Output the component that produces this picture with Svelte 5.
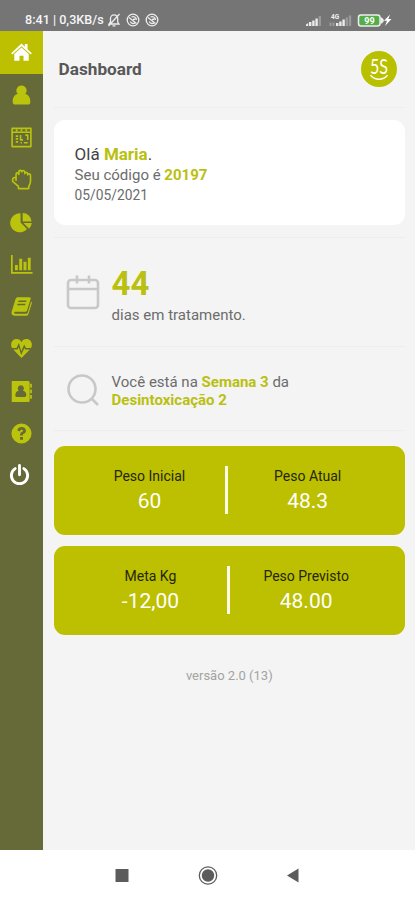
<script lang="ts">
  interface MenuIcon {
    name: string;
    fill?: string;
    stroke?: string;
  }

  const menu: MenuIcon[] = [
    {
      name: "Dashboard",
      fill: "M12 2.700 15.500 6V3.200h2.800v5.400l4.500 4.200-1.200 1.300L12 5.400l-9.600 8.700-1.200-1.300zM12 6.900l7.500 6.700v7.100h-5.400v-5.200H9.900v5.200H4.500v-7.100z",
    },
    {
      name: "Perfil",
      fill: "M12 1.500a5.300 5.300 0 0 1 3.900 8.900c3.300.7 5.300 3.300 5.300 8.300 0 2-1.200 2.800-2.700 2.800h-13c-1.500 0-2.700-.8-2.700-2.800 0-5 2-7.600 5.300-8.300A5.300 5.300 0 0 1 12 1.500z",
    },
    {
      name: "Agenda",
      stroke: "M2.200 2.500h19.600v19H2.200zM2.200 6.500h19.600M6 4.500h2M11 4.500h2M16 4.500h2M6 10.500h2.500M6 13.500h2.500M6 16.500h2.500M11 9.500v5h2.500M16 9.500h2.500v5M14.500 17.500h4M11 17.500h1.500",
    },
    {
      name: "Cuidados",
      stroke: "M6.300 13.500V6.800c0-2.200 2.900-2.200 2.900 0V4.200c0-2.300 3.100-2.300 3.100 0 0-2.200 3.100-2.200 3.100.2v1.500c0-1.900 3-1.900 3 .3v1c0-1.600 3-1.500 3 .4v6.400c0 2-1.100 3.500-1.800 5.200v2.300H8.800v-2.300l-6-5.200V11.500c.6-1.700 2.300-1.900 3.500-1",
    },
    {
      name: "Porções",
      fill: "M11 2.500V12l6.700 6.700A9.900 9.900 0 1 1 11 2.500zM13.200 2a9.300 9.300 0 0 1 9.300 8.900h-9.300zM14 12.500h8.700a9 9 0 0 1-2.800 5.900z",
    },
    {
      name: "Evolução",
      fill: "M1 2h1.800v17.800h20.700v1.800H1zM5.200 12.500h3v5.500h-3zM9.600 6h3.100v12H9.600zM14.100 9h3.100v9h-3.100zM18.600 5h3v13h-3z",
    },
    {
      name: "Receitas",
      fill: "M8.500 2.300h11.800c1 0 1.600.8 1.200 1.800l-3.700 12c-.3.900-1 1.500-2 1.500H5.300c-1.500 0-1.300 2 .1 2h11.500c.8 0 1.300-.3 1.500-1l3.600-11.800c.8.500 1 1.100.7 2L19.300 19.500c-.4 1.400-1.200 2.100-2.500 2.100H4.700C2.300 21.600 1 19.600 1.700 17.500L5.800 4.300c.4-1.300 1.400-2 2.700-2zM9 5.700l-.5 1.600h8.300l.5-1.600zM7.900 9.200l-.5 1.600h8.300l.5-1.600z",
    },
    {
      name: "Saúde",
      fill: "M12 5.500C14-.1 22.800 1.300 22.800 8c0 1.300-.3 2.400-.9 3.500h-5.200l-1.900-3.700-3 7-2.500-8.500-2.500 5.200H2.100C1.500 10.500 1.200 9.400 1.200 8 1.200 1.300 10 .1 12 5.500zM3.300 13h4.600l1.200-2.400 2.600 8.200 3.300-7.200.8 1.400h4.900L12 21.800z",
    },
    {
      name: "Contatos",
      fill: "M1.800 1h17c1 0 1.700.7 1.700 1.700v18.600c0 1-.7 1.700-1.700 1.700h-17zM21 4h1.800v4H21zM21 9.800h1.800v4H21zM21 15.600h1.800v4H21zM11.300 5.400a3.300 3.300 0 0 0-2.200 5.700c-2.300.4-3.500 2-3.500 4.900 0 1 .5 1.700 1.500 1.700h8.400c1 0 1.500-.7 1.500-1.700 0-2.900-1.200-4.500-3.500-4.900a3.300 3.300 0 0 0-2.200-5.700z",
    },
    {
      name: "Ajuda",
      fill: "M12 1.500a10.500 10.500 0 1 0 0 21 10.500 10.500 0 0 0 0-21zM7.500 8.700c.6-2.400 2.300-3.600 4.500-3.600 2.700 0 4.600 1.500 4.600 3.900 0 1.900-1.200 2.700-2.200 3.300-.8.500-1.100.8-1.100 1.800h-2.800c0-2.200.8-3 2-3.800.7-.4 1.100-.6 1.100-1.200 0-1.400-2.800-1.600-3.400.8zM10.500 15.700h3v2.900h-3z",
    },
    { name: "Sair", stroke: "M7.500 4.800a8.500 8.500 0 1 0 9 0M12 1.500v9.700" },
  ];

  const weights = [
    [
      { label: "Peso Inicial", value: "60" },
      { label: "Peso Atual", value: "48.3" },
    ],
    [
      { label: "Meta Kg", value: "-12,00" },
      { label: "Peso Previsto", value: "48.00" },
    ],
  ];
</script>

<div class="screen">
  <header class="status">
    <span class="clock">8:41 | 0,3KB/s</span>
    <svg class="bell" viewBox="0 0 14 14" width="14" height="14">
      <path d="M2 11h10l-1.300-2V5.500a3.600 3.600 0 0 0-7.200 0V9zM5.500 12.800h3M12.500 1 1.500 13" />
    </svg>
    {#each [1, 2] as id (id)}
      <svg class="muted" viewBox="0 0 14 14" width="14" height="14">
        <circle cx="7" cy="7" r="5.800" />
        <path d="m3 4.500 7.500 6M4.500 8.500c0 2 3 2.500 4.500 1.500M5.500 4c2-1 5 0 5 3M7 6.500l2.500-.5" />
      </svg>
    {/each}
    <svg class="signals" viewBox="0 0 90 18" width="90" height="18">
      <g fill="#ececec">
        <path d="M0 15v-1.500L2.200 12v3zM3 11h2.400v4H3zM6.200 9.500h2.400V15H6.200zM9.400 7.500h2.400V15H9.400z" />
        <path d="M30 12h2.400v3H30zM33.200 10.500h2.400V15h-2.400zM36.400 8.500h2.400V15h-2.400z" />
        <path d="m84 3.500-6 6.300h3L79 15l6.500-6.900h-3.200z" fill="#fff" />
      </g>
      <path d="M12.600 5H15v10h-2.400zM39.600 6.500H42V15h-2.400zM42.800 4.500h2.400V15h-2.400zM23.500 11.500h2V15h-2zM26.500 11.500h2V15h-2z" fill="#9a9a9a" />
      <text x="25" y="8" class="network">4G</text>
      <rect x="52.500" y="4" width="21.500" height="11" rx="2.500" fill="#53ad49" stroke="#eee" stroke-width="1.500" />
      <path d="M74.500 6c2.300 1 3.300 2.200 3.300 3.500s-1 2.500-3.300 3.500z" fill="#eee" />
      <text x="58.300" y="12.600" class="charge">99</text>
    </svg>
  </header>

  <div class="body">
    <nav>
      {#each menu as item, i (item.name)}
        <a href="#{i}" class:active={i === 0} class:power={i === menu.length - 1} aria-label={item.name}>
          <svg viewBox="0 0 24 24" width="23" height="23">
            {#if item.fill}
              <path class="solid" d={item.fill} />
            {/if}
            {#if item.stroke}
              <path class="line" d={item.stroke} />
            {/if}
          </svg>
        </a>
      {/each}
    </nav>

    <main>
      <div class="top">
        <h1>Dashboard</h1>
        <svg class="logo" viewBox="0 0 36 36" width="36" height="36">
          <circle cx="18" cy="18" r="18" />
          <text x="9" y="22.500" textLength="18" lengthAdjust="spacingAndGlyphs">5S</text>
          <path d="M9.500 24.300c4.500 5.300 12.500 5.300 17 0" />
        </svg>
      </div>

      <section class="welcome">
        <p class="hello">Olá <b>Maria</b>.</p>
        <p class="code">Seu código é <b>20197</b></p>
        <p class="date">05/05/2021</p>
      </section>

      <section class="row days">
        <svg viewBox="0 0 34 38" width="34" height="38">
          <path d="M5 6h24a3 3 0 0 1 3 3v22a3 3 0 0 1-3 3H5a3 3 0 0 1-3-3V9a3 3 0 0 1 3-3zM2 15h30M11 1.500v8M23 1.500v8" />
        </svg>
        <div>
          <strong>44</strong>
          <p>dias em tratamento.</p>
        </div>
      </section>

      <section class="row week">
        <svg viewBox="0 0 34 34" width="34" height="34">
          <circle cx="16" cy="16" r="13.500" />
          <path d="m25.500 25.500 6.500 6.500" />
        </svg>
        <p>Você está na <b>Semana 3</b> da<br /><b>Desintoxicação 2</b></p>
      </section>

      {#each weights as pair, i (i)}
        <section class="weights" class:second={i === 1}>
          {#each pair as weight (weight.label)}
            <div>
              <span>{weight.label}</span>
              <em>{weight.value}</em>
            </div>
          {/each}
        </section>
      {/each}

      <p class="version">versão 2.0 (13)</p>
    </main>
  </div>

  <footer>
    <svg viewBox="0 0 415 50" width="415" height="50">
      <rect x="115.500" y="19" width="13" height="13" />
      <circle cx="208" cy="25.500" r="6.200" />
      <circle class="ring" cx="208" cy="25.500" r="8.700" />
      <path d="m287 25.500 11.500-7v14z" />
    </svg>
  </footer>
</div>

<style>
  :global(body) {
    margin: 0;
  }

  .screen {
    display: flex;
    flex-direction: column;
    width: 415px;
    height: 900px;
    overflow: hidden;
    background: #f4f4f4;
    color: #6c6c6c;
    font-family: Roboto, "Liberation Sans", sans-serif;
  }

  p,
  h1 {
    margin: 0;
  }

  b,
  strong {
    color: #b9c010;
    font-weight: 700;
  }

  .status {
    display: flex;
    align-items: center;
    box-sizing: border-box;
    height: 31px;
    padding: 8px 19px 0 25px;
    background: #757575;
    color: #f5f5f5;
  }

  .clock {
    width: 82px;
    font-size: 12.600px;
    font-weight: 500;
    white-space: nowrap;
  }

  .status svg {
    flex: none;
  }

  .bell,
  .muted {
    fill: none;
    stroke: #ededed;
    stroke-width: 1.300;
  }

  .muted {
    margin-left: 5px;
  }

  .signals {
    margin-left: auto;
  }

  .network {
    fill: #f0f0f0;
    font-size: 6.500px;
    font-weight: 700;
  }

  .charge {
    fill: #fff;
    font-size: 9px;
    font-weight: 700;
  }

  .body {
    display: flex;
    height: 819px;
  }

  nav {
    flex: none;
    width: 42.600px;
    background: #666938;
  }

  nav a {
    display: flex;
    align-items: center;
    justify-content: center;
    box-sizing: border-box;
    height: 42.300px;
    color: #bbc40c;
  }

  nav a.active {
    height: 43px;
    background: #bcc000;
    color: #fff;
  }

  nav a.power {
    padding-right: 3px;
    color: #fff;
  }

  nav svg {
    display: block;
  }

  .solid {
    fill: currentColor;
    fill-rule: evenodd;
  }

  .line {
    fill: none;
    stroke: currentColor;
    stroke-width: 1.700;
    stroke-linejoin: round;
  }

  .power .line {
    stroke-width: 3;
    stroke-linecap: round;
  }

  main {
    flex: 1;
    padding: 0 10px 0 11px;
  }

  .top {
    display: flex;
    align-items: center;
    justify-content: space-between;
    height: 76px;
    padding: 0 8px 0 5px;
    border-bottom: 1px solid #ededed;
  }

  h1 {
    color: #585858;
    font-size: 17.200px;
    font-weight: 700;
  }

  .logo circle {
    fill: #b9c000;
  }

  .logo text {
    fill: #fff;
    font-family: Lato, sans-serif;
    font-size: 20.500px;
    font-weight: 400;
  }

  .logo path {
    fill: none;
    stroke: #fff;
    stroke-width: 1.400;
  }

  .welcome {
    box-sizing: border-box;
    height: 105px;
    margin: 12px 0;
    padding: 23px 21px;
    border-radius: 11px;
    background: #fff;
  }

  .hello {
    color: #444;
    font-size: 17px;
    line-height: 22px;
  }

  .code {
    font-size: 15px;
    line-height: 21px;
  }

  .date {
    font-size: 13.800px;
    line-height: 19px;
  }

  .row {
    display: flex;
    align-items: center;
    gap: 12px;
    box-sizing: border-box;
    padding-left: 12px;
    border-top: 1px solid #ededed;
    font-size: 15px;
    line-height: 18px;
  }

  .row svg {
    flex: none;
    fill: none;
    stroke: #c8c8c8;
    stroke-width: 2.600;
  }

  .days {
    height: 109px;
    padding-top: 2px;
  }

  .days div {
    padding-top: 3px;
  }

  .days strong {
    display: block;
    margin-bottom: 3px;
    font-size: 33px;
    line-height: 38px;
  }

  .week {
    height: 85px;
    padding-top: 3px;
    border-bottom: 1px solid #ededed;
  }

  .week p {
    padding-top: 2px;
  }

  .weights {
    display: grid;
    grid-template-columns: 1fr 1fr;
    align-items: center;
    box-sizing: border-box;
    height: 89.500px;
    margin: 14.500px 0 10.500px;
    padding: 0 18px 0 16px;
    border-radius: 11px;
    background: #bcc000;
    text-align: center;
  }

  .weights.second {
    margin-top: 0;
    padding: 0 18px 0 20px;
  }

  .weights div:first-child {
    padding-left: 4px;
    border-right: 3px solid #fbfbe8;
  }

  .weights.second div:first-child {
    padding-left: 0;
  }

  .weights.second div:last-child {
    padding-right: 5px;
  }

  .weights div {
    height: 48px;
  }

  .weights span,
  .weights em {
    display: block;
  }

  .weights span {
    color: #25260c;
    font-size: 14px;
    line-height: 21px;
  }

  .weights em {
    color: #fff;
    font-size: 21px;
    font-style: normal;
    line-height: 28px;
  }

  .version {
    margin-top: 31.500px;
    color: #a3a3a3;
    font-size: 13px;
    line-height: 18px;
    text-align: center;
  }

  footer {
    height: 50px;
    background: #fff;
  }

  footer svg {
    display: block;
    fill: #5c5c5c;
  }

  footer .ring {
    fill: none;
    stroke: #5c5c5c;
    stroke-width: 1.300;
  }
</style>
